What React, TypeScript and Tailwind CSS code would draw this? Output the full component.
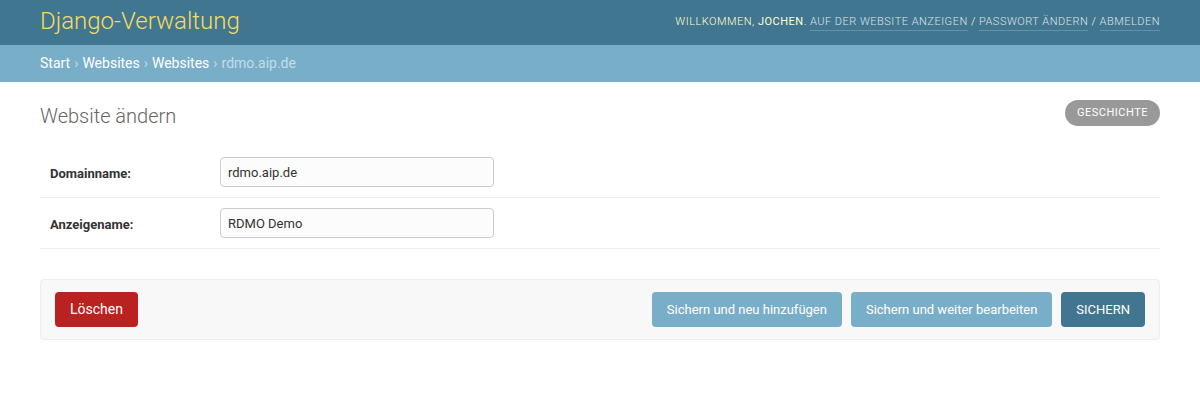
import React from 'react';

const font = { fontFamily: 'Roboto, "Liberation Sans", Arial, sans-serif' };

export default function App() {
  return (
    <div className="min-h-[400px] bg-white text-[14px] text-[#333]" style={font}>
      {/* Header */}
      <div className="h-[45px] bg-[#417690] px-[40px] flex items-center justify-between">
        <div className="text-[24px] font-light text-[#f5dd5d] leading-none -mt-[3px]">Django-Verwaltung</div>
        <div className="text-[11px] font-light uppercase tracking-[0.5px] text-[#ffc] leading-none -mt-[3px]">
          Willkommen, <strong className="font-normal text-[#ffc]">Jochen</strong>.{' '}
          <a className="text-[#fff] opacity-80 border-b border-white/25 pb-[2px]">Auf der Website anzeigen</a> /{' '}
          <a className="text-[#fff] opacity-80 border-b border-white/25 pb-[2px]">Passwort ändern</a> /{' '}
          <a className="text-[#fff] opacity-80 border-b border-white/25 pb-[2px]">Abmelden</a>
        </div>
      </div>

      {/* Breadcrumbs */}
      <div className="h-[37px] bg-[#79aec8] px-[40px] flex items-center text-[14px] text-[#c4dce8]">
        <a className="text-white">Start</a>
        <span className="mx-[4px]">›</span>
        <a className="text-white">Websites</a>
        <span className="mx-[4px]">›</span>
        <a className="text-white">Websites</a>
        <span className="mx-[4px]">›</span>
        <span>rdmo.aip.de</span>
      </div>

      {/* Content */}
      <div className="px-[40px] pt-[18px]">
        <div className="flex items-center justify-between">
          <h1 className="text-[20px] font-light text-[#666] leading-none mt-[5px]">Website ändern</h1>
          <a className="h-[26px] px-[12px] rounded-full bg-[#999] text-white text-[11px] uppercase tracking-[0.5px] flex items-center">
            Geschichte
          </a>
        </div>

        <div className="mt-[21px]">
          {[
            ['Domainname:', 'rdmo.aip.de'],
            ['Anzeigename:', 'RDMO Demo'],
          ].map(([label, value]) => (
            <div key={label} className="flex items-center p-[10px] border-b border-[#eee]">
              <label className="w-[170px] text-[13px] font-bold text-[#333] pt-[3px]">{label}</label>
              <input
                readOnly
                value={value}
                className="w-[274px] h-[30px] px-[7px] border border-[#ccc] rounded-[4px] bg-[#fcfcfc] text-[13px] text-[#333] outline-none"
                style={font}
              />
            </div>
          ))}
        </div>

        <div className="mt-[30px] flex items-center justify-between px-[14px] py-[12px] bg-[#f8f8f8] border border-[#eee] rounded-[4px]">
          <a className="h-[35px] px-[15px] rounded-[4px] bg-[#ba2121] text-white text-[14px] flex items-center">Löschen</a>
          <div className="flex items-center gap-[9px]">
            <button className="h-[35px] px-[15px] rounded-[4px] bg-[#79aec8] text-white text-[13px] whitespace-nowrap" style={font}>
              Sichern und neu hinzufügen
            </button>
            <button className="h-[35px] px-[15px] rounded-[4px] bg-[#79aec8] text-white text-[13px] whitespace-nowrap" style={font}>
              Sichern und weiter bearbeiten
            </button>
            <button className="h-[35px] px-[15px] rounded-[4px] bg-[#417690] text-white text-[13px]" style={font}>
              SICHERN
            </button>
          </div>
        </div>
      </div>
    </div>
  );
}
